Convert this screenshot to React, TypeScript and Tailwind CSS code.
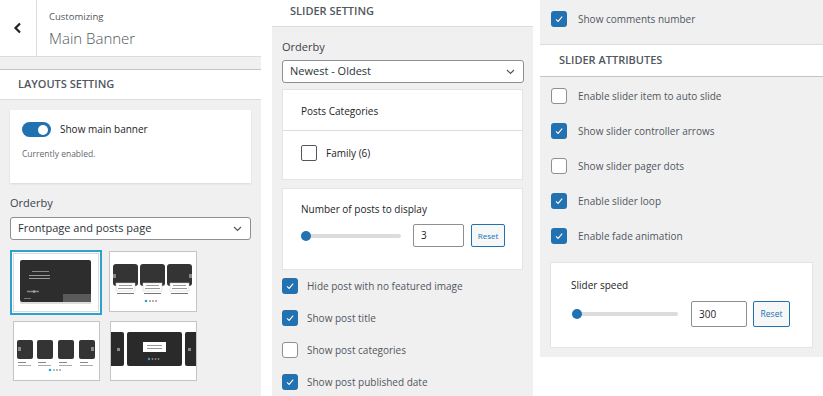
import React from "react";

const font = "font-['Open_Sans','Noto_Sans',sans-serif]";

function Check({ checked }: { checked: boolean }) {
  return checked ? (
    <div className="w-4 h-4 rounded-[3px] bg-[#2271b1] flex items-center justify-center shrink-0">
      <svg width="10" height="10" viewBox="0 0 10 10">
        <path d="M2 5.3 L4.1 7.4 L8.2 2.6" fill="none" stroke="white" strokeWidth="1.1" />
      </svg>
    </div>
  ) : (
    <div className="w-4 h-4 rounded-[3px] bg-white border border-[#8c8f94] shrink-0" />
  );
}

function Chevron() {
  return (
    <svg width="9" height="6" viewBox="0 0 9 6">
      <path d="M1 1 L4.5 4.5 L8 1" fill="none" stroke="#50575e" strokeWidth="1.2" />
    </svg>
  );
}

function Select({ text }: { text: string }) {
  return (
    <div className="h-[23px] bg-white border border-[#8c8f94] rounded-[3px] flex items-center justify-between pl-[7px] pr-[8px]">
      <span className="text-[11px] text-[#2c3338]">{text}</span>
      <Chevron />
    </div>
  );
}

function CheckRow({ checked, label, gap }: { checked: boolean; label: string; gap: string }) {
  return (
    <div className={`flex items-center ${gap}`}>
      <Check checked={checked} />
      <span className="text-[10px] text-[#50575e]">{label}</span>
    </div>
  );
}

function Slider({ width }: { width: string }) {
  return (
    <div className={`relative h-[10px] ${width} flex items-center`}>
      <div className="h-[4px] w-full rounded-full bg-[#dcdcde]" />
      <div className="absolute left-0 top-0 w-[10px] h-[10px] rounded-full bg-[#2271b1]" />
    </div>
  );
}

function Thumb1() {
  return (
    <div className="w-[92px] h-[65px] border-[2px] border-[#2ea2cc] bg-white">
      <svg width="88" height="61" viewBox="0 0 88 61">
        <rect x="1.5" y="1.5" width="85" height="58" fill="white" stroke="#dcdcde" />
        <rect x="8" y="8" width="71" height="42" rx="2" fill="#2d2d2d" />
        <line x1="8" y1="51" x2="79" y2="51" stroke="#bbb" />
        <line x1="20" y1="19.5" x2="37" y2="19.5" stroke="#8a8a8a" />
        <line x1="17" y1="23.5" x2="38" y2="23.5" stroke="#9a9a9a" />
        <line x1="17" y1="26.5" x2="38" y2="26.5" stroke="#9a9a9a" />
        <line x1="15" y1="39.5" x2="27" y2="39.5" stroke="#888" strokeWidth="1.5" />
        <circle cx="22" cy="39.5" r="1.2" fill="#aaa" />
        <line x1="12" y1="46.5" x2="19" y2="46.5" stroke="#777" />
        <rect x="51" y="42" width="28" height="8" fill="#5a5a5a" />
      </svg>
    </div>
  );
}

function Thumb2() {
  const cards = [3, 30, 57];
  return (
    <div className="w-[88px] h-[61px] border border-[#c3c4c7] bg-white">
      <svg width="86" height="59" viewBox="0 0 86 59">
        {cards.map((x) => (
          <g key={x}>
            <rect x={x} y="12" width="25" height="22" rx="3" fill="#343434" />
            <rect x={x + 3} y="31" width="19" height="8" fill="white" stroke="#ccc" strokeWidth="0.5" />
            <line x1={x + 6} y1="33.5" x2={x + 19} y2="33.5" stroke="#999" />
            <line x1={x + 5} y1="36.5" x2={x + 20} y2="36.5" stroke="#999" />
            <line x1={x + 4} y1="41.5" x2={x + 21} y2="41.5" stroke="#777" />
          </g>
        ))}
        <rect x="3" y="22" width="3" height="4" fill="#888" />
        <rect x="79" y="22" width="3" height="4" fill="#888" />
        <circle cx="36" cy="49" r="1.3" fill="#2ea2cc" />
        <circle cx="40" cy="49" r="1" fill="#999" />
        <circle cx="43" cy="49" r="1" fill="#999" />
        <circle cx="46" cy="49" r="1" fill="#999" />
      </svg>
    </div>
  );
}

function Thumb3() {
  const xs = [3, 23, 44, 65];
  return (
    <div className="w-[87px] h-[60px] border border-[#c3c4c7] bg-white">
      <svg width="85" height="58" viewBox="0 0 85 58">
        {xs.map((x) => (
          <g key={x}>
            <rect x={x} y="18" width="16" height="19" rx="2" fill="#343434" />
            <line x1={x + 1} y1="40.5" x2={x + 9} y2="40.5" stroke="#888" />
            <line x1={x + 1} y1="43.5" x2={x + 14} y2="43.5" stroke="#aaa" />
          </g>
        ))}
        <rect x="4" y="25" width="3" height="4" fill="#888" />
        <rect x="77" y="25" width="3" height="4" fill="#888" />
        <circle cx="36" cy="48" r="1.3" fill="#2ea2cc" />
        <circle cx="40" cy="48" r="0.9" fill="#999" />
        <circle cx="43" cy="48" r="0.9" fill="#999" />
        <circle cx="46" cy="48" r="0.9" fill="#999" />
      </svg>
    </div>
  );
}

function Thumb4() {
  return (
    <div className="w-[87px] h-[60px] border border-[#c3c4c7] bg-white overflow-hidden">
      <svg width="85" height="58" viewBox="0 0 85 58">
        <rect x="-4" y="10" width="17" height="34" rx="2" fill="#2a2a2a" />
        <rect x="16" y="10" width="55" height="34" rx="2" fill="#2a2a2a" />
        <rect x="74" y="10" width="17" height="34" rx="2" fill="#2a2a2a" />
        <rect x="32" y="20" width="23" height="10" fill="white" />
        <line x1="36" y1="23.5" x2="51" y2="23.5" stroke="#999" />
        <line x1="36" y1="26.5" x2="51" y2="26.5" stroke="#999" />
        <rect x="6" y="26" width="3" height="3" fill="#888" />
        <rect x="77" y="26" width="3" height="3" fill="#888" />
        <circle cx="38" cy="37" r="1.2" fill="#2ea2cc" />
        <circle cx="41.5" cy="37" r="0.9" fill="#888" />
        <circle cx="44.5" cy="37" r="0.9" fill="#888" />
        <circle cx="47.5" cy="37" r="0.9" fill="#888" />
      </svg>
    </div>
  );
}

export default function App() {
  return (
    <div className={`w-[823px] h-[396px] bg-white flex items-start overflow-hidden ${font}`}>
      {/* Left panel */}
      <div className="w-[261px] h-[396px] bg-[#f0f0f1] flex flex-col shrink-0">
        <div className="h-[57px] bg-white border-b border-[#dcdcde] flex">
          <div className="w-[37px] border-r border-[#dcdcde] flex items-center justify-center">
            <svg width="10" height="12" viewBox="0 0 10 12">
              <path d="M7 1.5 L2.5 6 L7 10.5" fill="none" stroke="#1d2327" strokeWidth="2.2" />
            </svg>
          </div>
          <div className="pl-[12px] pt-[10px] flex flex-col">
            <span className="text-[9.5px] leading-[14px] text-[#50575e]">Customizing</span>
            <span className="text-[15px] leading-[20px] font-light text-[#50575e] mt-[4px]">Main Banner</span>
          </div>
        </div>
        <div className="mt-[12px] h-[31px] bg-white border-t border-[#c3c4c7] border-b border-b-[#dcdcde] flex items-center pl-[18px]">
          <span className="text-[11px] font-semibold text-[#50575e] uppercase">Layouts Setting</span>
        </div>
        <div className="mx-[10px] mt-[10px] h-[73px] bg-white shadow-[0_1px_2px_rgba(0,0,0,0.1)] px-[12px] pt-[12px] flex flex-col">
          <div className="flex items-center gap-[9px]">
            <div className="w-[29px] h-[15px] rounded-full bg-[#2271b1] flex items-center justify-end pr-[3px]">
              <div className="w-[10px] h-[10px] rounded-full bg-white" />
            </div>
            <span className="text-[10px] text-[#1d2327]">Show main banner</span>
          </div>
          <span className="mt-[11px] text-[8.5px] text-[#646970]">Currently enabled.</span>
        </div>
        <div className="px-[10px] mt-[13px] flex flex-col">
          <span className="text-[11px] font-medium text-[#3c434a] leading-[14px]">Orderby</span>
          <div className="mt-[7px]">
            <Select text="Frontpage and posts page" />
          </div>
          <div className="mt-[10px] flex gap-[7px]">
            <Thumb1 />
            <div className="pt-[1px]"><Thumb2 /></div>
          </div>
          <div className="mt-[6px] flex gap-[10px] pl-[3px]">
            <Thumb3 />
            <Thumb4 />
          </div>
        </div>
      </div>

      <div className="w-[11px] shrink-0" />

      {/* Middle panel */}
      <div className="w-[261px] h-[396px] bg-[#f0f0f1] flex flex-col shrink-0">
        <div className="h-[27px] bg-white border-b border-[#dcdcde] flex items-center pl-[18px] pb-[3px]">
          <span className="text-[11px] font-semibold text-[#50575e] uppercase">Slider Setting</span>
        </div>
        <div className="px-[10px] flex flex-col">
          <span className="mt-[13px] text-[11px] font-medium text-[#3c434a] leading-[14px]">Orderby</span>
          <div className="mt-[6px] mr-[-1px]">
            <Select text="Newest - Oldest" />
          </div>
          <div className="mt-[6px] h-[91px] bg-white border border-[#e2e4e7] flex flex-col">
            <div className="h-[41px] border-b border-[#dcdcde] flex items-center pl-[18px] pt-[2px]">
              <span className="text-[10px] text-[#1d2327]">Posts Categories</span>
            </div>
            <div className="flex items-center pl-[18px] pt-[14px] gap-[9px]">
              <div className="w-4 h-4 rounded-[2px] bg-white border border-[#50575e]" />
              <span className="text-[10px] text-[#1d2327]">Family (6)</span>
            </div>
          </div>
          <div className="mt-[8px] h-[82px] bg-white border border-[#e2e4e7] flex flex-col pl-[18px] pt-[13px]">
            <span className="text-[10px] text-[#1d2327] leading-[14px]">Number of posts to display</span>
            <div className="mt-[8px] flex items-center">
              <Slider width="w-[100px]" />
              <div className="ml-[12px] w-[51px] h-[23px] border border-[#8c8f94] rounded-[2px] flex items-center pl-[7px] text-[10px] text-[#1d2327]">3</div>
              <div className="ml-[7px] w-[34px] h-[23px] border border-[#2271b1] rounded-[2px] flex items-center justify-center text-[8px] text-[#2271b1] bg-[#f6f7f7]">Reset</div>
            </div>
          </div>
          <div className="mt-[8px] flex flex-col gap-[16px]">
            <CheckRow checked label="Hide post with no featured image" gap="gap-[9px]" />
            <CheckRow checked label="Show post title" gap="gap-[9px]" />
            <CheckRow checked={false} label="Show post categories" gap="gap-[9px]" />
            <CheckRow checked label="Show post published date" gap="gap-[9px]" />
          </div>
        </div>
      </div>

      <div className="w-[7px] shrink-0" />

      {/* Right panel */}
      <div className="w-[283px] h-[357px] bg-[#f0f0f1] flex flex-col shrink-0">
        <div className="pl-[11px] pt-[11px]">
          <CheckRow checked label="Show comments number" gap="gap-[11px]" />
        </div>
        <div className="mt-[17px] h-[33px] bg-white border-t border-[#dcdcde] border-b border-b-[#c3c4c7] flex items-center pl-[19px]">
          <span className="text-[11px] font-semibold text-[#50575e] uppercase">Slider Attributes</span>
        </div>
        <div className="pl-[11px] mt-[11px] flex flex-col gap-[19px]">
          <CheckRow checked={false} label="Enable slider item to auto slide" gap="gap-[11px]" />
          <CheckRow checked label="Show slider controller arrows" gap="gap-[11px]" />
          <CheckRow checked={false} label="Show slider pager dots" gap="gap-[11px]" />
          <CheckRow checked label="Enable slider loop" gap="gap-[11px]" />
          <CheckRow checked label="Enable fade animation" gap="gap-[11px]" />
        </div>
        <div className="mx-[10px] mt-[18px] h-[86px] bg-white border border-[#e2e4e7] flex flex-col pl-[20px] pt-[15px]">
          <span className="text-[10px] text-[#1d2327] leading-[14px]">Slider speed</span>
          <div className="mt-[9px] flex items-center pl-[1px]">
            <Slider width="w-[106px]" />
            <div className="ml-[13px] w-[56px] h-[26px] border border-[#8c8f94] rounded-[2px] flex items-center pl-[7px] text-[10px] text-[#1d2327]">300</div>
            <div className="ml-[6px] w-[37px] h-[26px] border border-[#2271b1] rounded-[2px] flex items-center justify-center text-[8.5px] text-[#2271b1] bg-[#f6f7f7]">Reset</div>
          </div>
        </div>
      </div>
    </div>
  );
}
